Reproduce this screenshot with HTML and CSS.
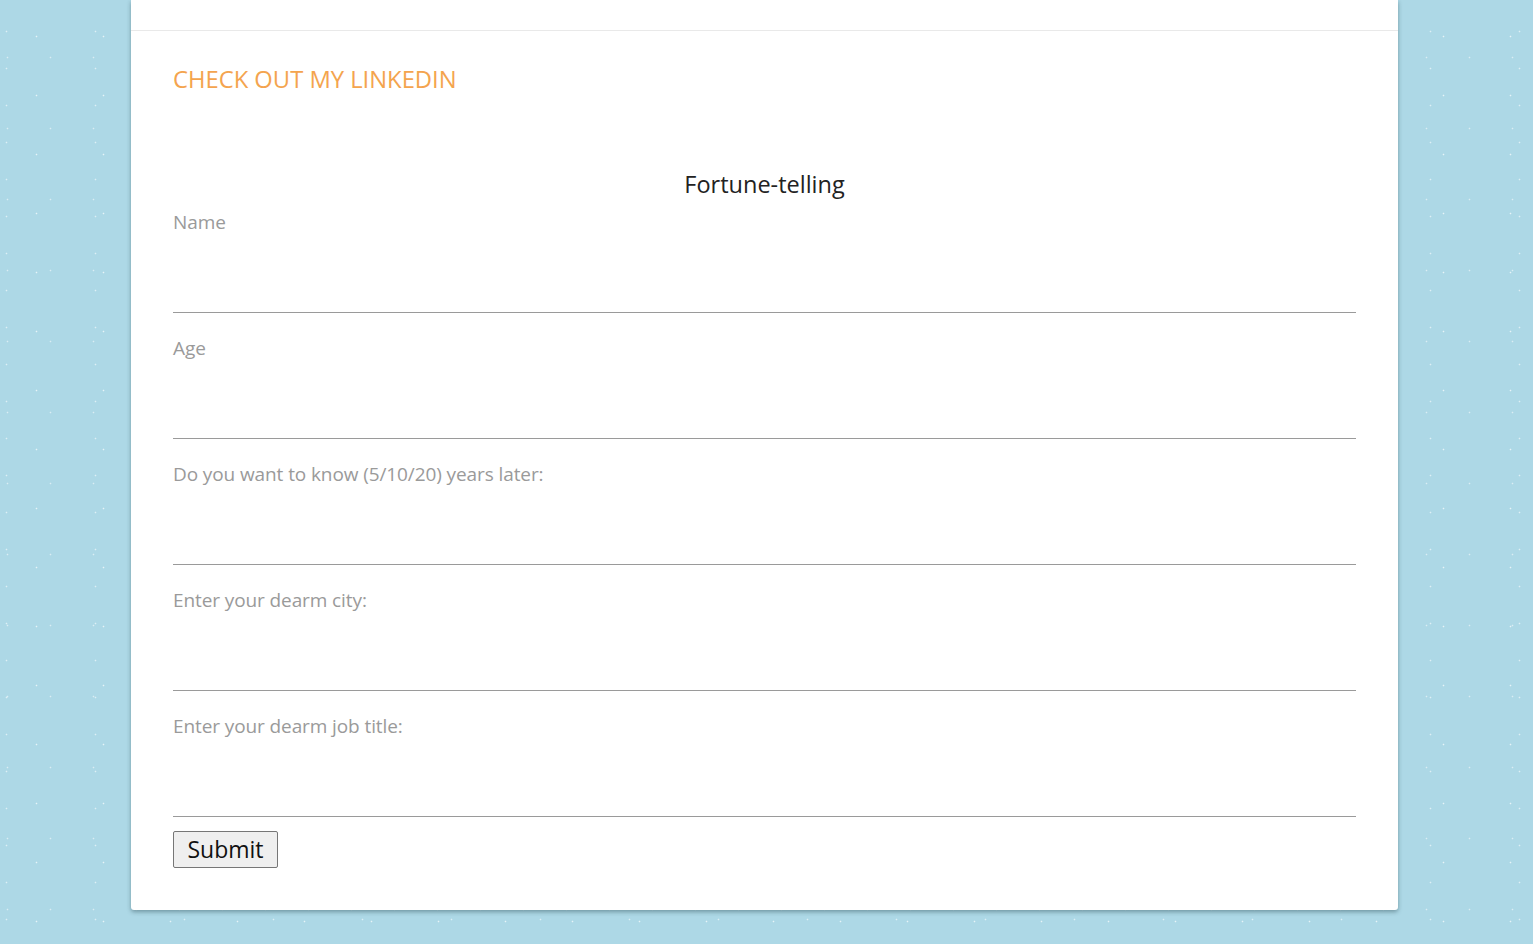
FILE: index.html
```html
<!DOCTYPE html>
<html lang="en">
<head>
<meta charset="utf-8">
<title>Fortune-telling</title>
<link rel="stylesheet" href="styles.css">
</head>
<body>
<main class="card">
  <div class="card-top"></div>
  <section class="card-body">
    <h2 class="linkedin">CHECK OUT MY LINKEDIN</h2>
    <form class="fortune-form">
      <h3 class="form-title">Fortune-telling</h3>
      <div class="field">
        <label class="field-label" for="name">Name</label>
        <input class="field-input" id="name" type="text">
      </div>
      <div class="field">
        <label class="field-label" for="age">Age</label>
        <input class="field-input" id="age" type="text">
      </div>
      <div class="field">
        <label class="field-label" for="years">Do you want to know (5/10/20) years later:</label>
        <input class="field-input" id="years" type="text">
      </div>
      <div class="field">
        <label class="field-label" for="city">Enter your dearm city:</label>
        <input class="field-input" id="city" type="text">
      </div>
      <div class="field">
        <label class="field-label" for="job">Enter your dearm job title:</label>
        <input class="field-input" id="job" type="text">
      </div>
      <button class="submit" type="button">Submit</button>
    </form>
  </section>
</main>
</body>
</html>
```

FILE: styles.css
```css
html, body {
  margin: 0;
  padding: 0;
}
body {
  min-height: 944px;
  background-color: #add8e6;
  background-image:
    radial-gradient(circle, rgba(255,255,255,0.7) 0.7px, transparent 1.1px),
    radial-gradient(circle, rgba(255,255,255,0.55) 0.7px, transparent 1.1px),
    radial-gradient(circle, rgba(255,255,255,0.6) 0.7px, transparent 1.1px);
  background-size: 67px 59px, 43px 71px, 89px 37px;
  background-position: 3px 7px, 29px 22px, 51px 13px;
  font-family: "Open Sans", "Noto Sans", sans-serif;
  overflow: hidden;
}
.card {
  margin-left: 131px;
  width: 1267px;
  background: #fff;
  border-radius: 0 0 3px 3px;
  box-shadow: 0 2px 4px rgba(40, 70, 80, 0.45);
}
.card-top {
  height: 30px;
  border-bottom: 1px solid #e9e9e9;
}
.card-body {
  padding: 34px 42px 42px;
}
.linkedin {
  margin: 0;
  font-size: 23.75px;
  font-weight: 400;
  line-height: 28px;
  color: #f4a44e;
}
.fortune-form {
  margin-top: 76px;
}
.form-title {
  margin: 0 0 11px;
  text-align: center;
  font-size: 23.5px;
  font-weight: 400;
  line-height: 30px;
  color: #222;
}
.field {
  display: flex;
  flex-direction: column;
  margin-bottom: 23px;
}
.field:last-of-type {
  margin-bottom: 14px;
}
.field-label {
  font-size: 19px;
  line-height: 25px;
  color: #9a9a9a;
  letter-spacing: -0.1px;
}
.field-input {
  height: 78px;
  box-sizing: border-box;
  border: none;
  border-bottom: 1px solid #9a9a9a;
  outline: none;
  padding: 0;
  margin: 0;
  font-size: 18px;
  background: transparent;
}
.submit {
  display: block;
  width: 105px;
  height: 37px;
  padding: 0;
  font-family: "Open Sans", "Noto Sans", sans-serif;
  font-size: 23px;
  line-height: 1;
  color: #111;
  background: #efefef;
  border: 1px solid #767676;
  border-radius: 2px;
}
```
